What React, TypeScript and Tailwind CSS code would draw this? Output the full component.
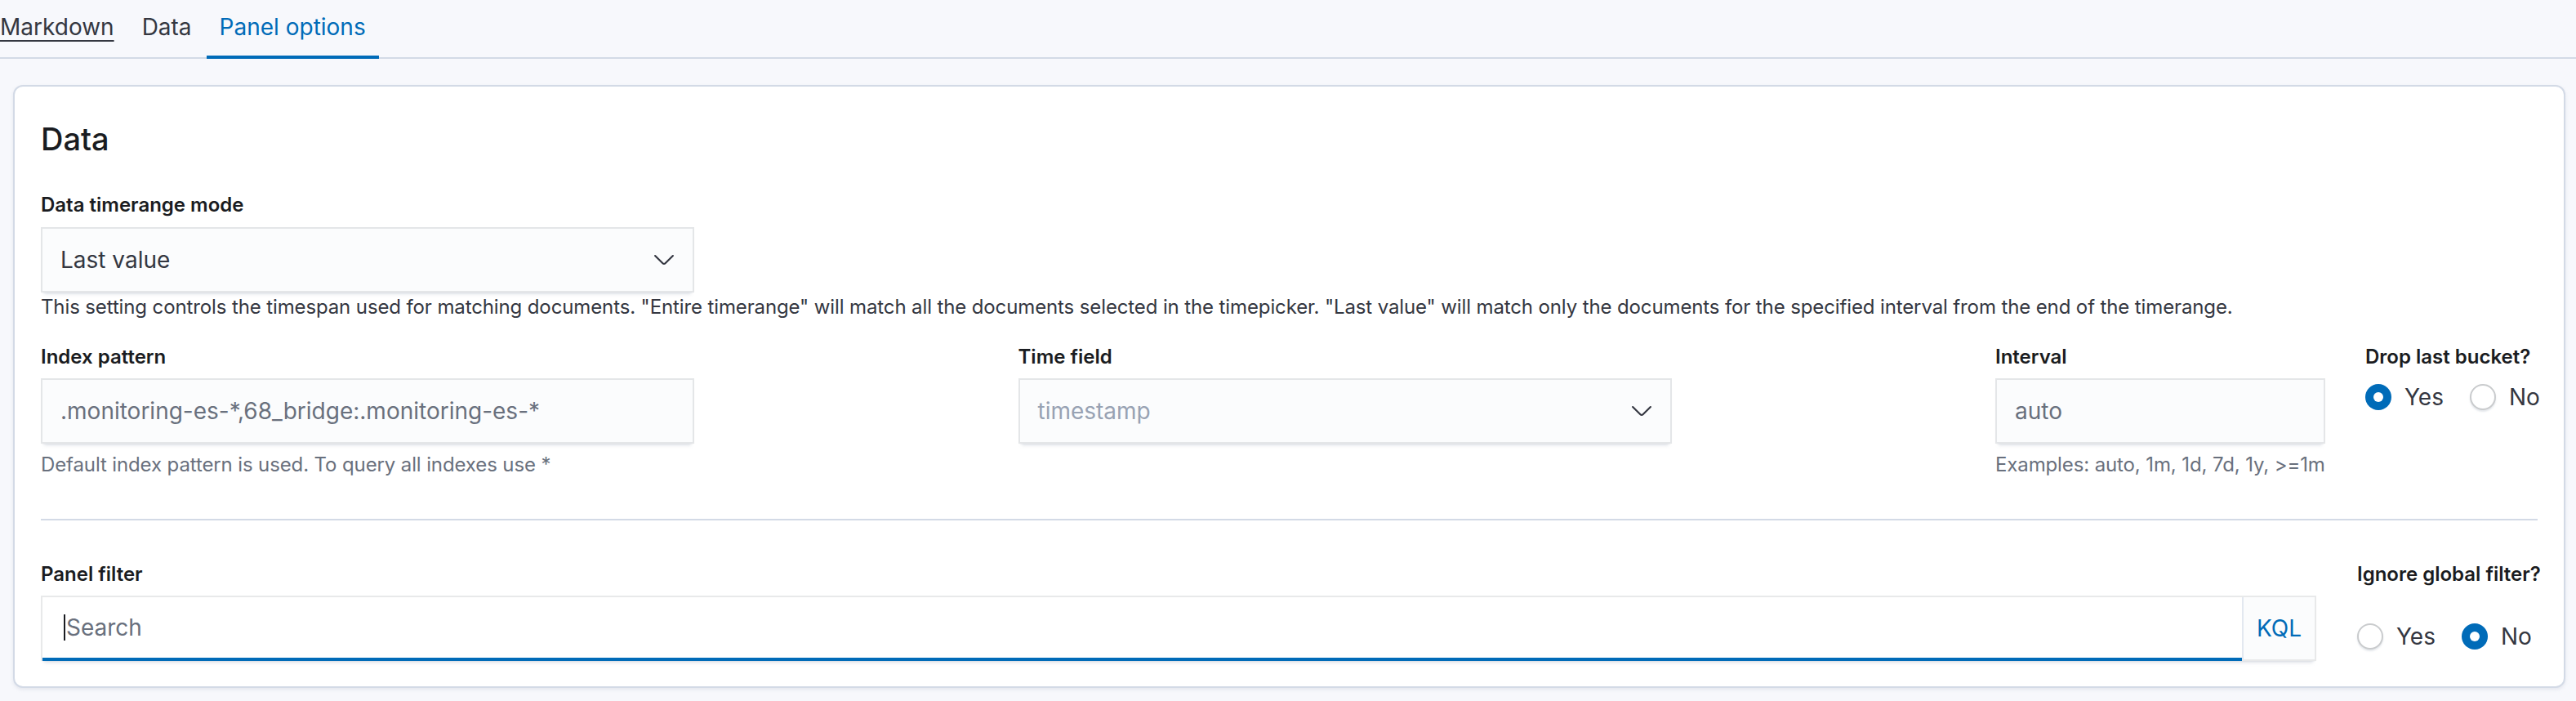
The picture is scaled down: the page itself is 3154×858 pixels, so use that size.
import React from "react";

const Chevron = () => (
  <svg width="32" height="32" viewBox="0 0 16 16" className="shrink-0">
    <path
      fill="#343741"
      d="M13.069 5.157L8.384 9.768a.546.546 0 01-.768 0L2.93 5.158a.552.552 0 00-.771 0 .53.53 0 000 .759l4.684 4.61c.641.631 1.672.63 2.312 0l4.684-4.61a.53.53 0 000-.76.552.552 0 00-.771 0z"
    />
  </svg>
);

const Label = ({ children, className = "" }: { children: React.ReactNode; className?: string }) => (
  <div className={`text-[24px] leading-[36px] font-semibold text-[#1A1C21] whitespace-nowrap ${className}`}>{children}</div>
);

const controlCls =
  "h-[80px] bg-[#FBFCFD] shadow-[inset_0_0_0_2px_rgba(32,38,47,0.1),0_2px_2px_-2px_rgba(152,162,179,0.3),0_6px_4px_-4px_rgba(152,162,179,0.3)] flex items-center text-[28px]";

const Radio = ({ checked, label, last }: { checked: boolean; label: string; last?: boolean }) => (
  <div className={`flex items-center ${last ? "" : "mr-[32px]"}`}>
    {checked ? (
      <span className="w-[32px] h-[32px] rounded-full bg-[#006BB8] flex items-center justify-center">
        <span className="w-[12px] h-[12px] rounded-full bg-white" />
      </span>
    ) : (
      <span className="w-[32px] h-[32px] rounded-full bg-white border-2 border-[#C9CBCD] shadow-[0_2px_2px_rgba(152,162,179,0.25)]" />
    )}
    <span className="ml-[16px] text-[28px] leading-[32px] text-[#343741]">{label}</span>
  </div>
);

const Tab = ({ label, active, underline }: { label: string; active?: boolean; underline?: boolean }) => (
  <div
    className={`h-[72px] px-[16px] pb-[2px] flex items-center border-b-4 text-[28px] leading-[34px] ${
      active ? "border-[#006BB8] text-[#006BB8]" : "border-transparent text-[#343741]"
    } ${underline ? "underline underline-offset-[6px] decoration-2" : ""}`}
  >
    {label}
  </div>
);

export default function App() {
  return (
    <div className="w-[3154px] h-[858px] bg-[#F7F8FC] font-['Inter',sans-serif] text-[#343741] overflow-hidden">
      <div className="h-[72px] border-b-2 border-[#D3DAE6]">
        <div className="flex -ml-[16px] gap-[2px]">
          <Tab label="Markdown" underline />
          <Tab label="Data" />
          <Tab label="Panel options" active />
        </div>
      </div>

      <div className="pl-[16px] pr-[13px] pt-[32px]">
        <div className="bg-white border-2 border-[#D3DAE6] rounded-[12px] shadow-[0_2px_4px_rgba(152,162,179,0.2)] pt-[41px] px-[32px] pb-[31px]">
          <h2 className="text-[38px] leading-[46px] font-medium text-[#1A1C21]">Data</h2>

          <Label className="mt-[40px] mb-[9px]">Data timerange mode</Label>
          <div className={`${controlCls} w-[800px] pl-[24px] pr-[21px] justify-between text-[#343741]`}>
            <span>Last value</span>
            <Chevron />
          </div>
          <p className="text-[24px] leading-[36px] tracking-[-0.005em] text-[#343741] whitespace-nowrap">
            This setting controls the timespan used for matching documents. "Entire timerange" will match all the documents selected in the timepicker. "Last value" will match only the documents for the specified interval from the end of the timerange.
          </p>

          <div className="flex gap-[32px] mt-[25px]">
            <div className="flex-1 min-w-0">
              <Label className="mb-[8px]">Index pattern</Label>
              <div className={`${controlCls} max-w-[800px] px-[24px] text-[#69707D]`}>
                .monitoring-es-*,68_bridge:.monitoring-es-*
              </div>
              <div className="mt-[8px] text-[24px] leading-[36px] tracking-[-0.005em] text-[#69707D] whitespace-nowrap">
                Default index pattern is used. To query all indexes use *
              </div>
            </div>
            <div className="flex-1 min-w-0">
              <Label className="mb-[8px]">Time field</Label>
              <div className={`${controlCls} max-w-[800px] pl-[24px] pr-[21px] justify-between text-[#98A2B3]`}>
                <span>timestamp</span>
                <Chevron />
              </div>
            </div>
            <div className="w-[421px] shrink-0">
              <Label className="mb-[8px]">Interval</Label>
              <div className={`${controlCls} w-[404px] px-[24px] text-[#69707D]`}>auto</div>
              <div className="mt-[8px] text-[24px] leading-[36px] tracking-[-0.005em] text-[#69707D] whitespace-nowrap">
                Examples: auto, 1m, 1d, 7d, 1y, &gt;=1m
              </div>
            </div>
            <div className="w-[211px] shrink-0">
              <Label>Drop last bucket?</Label>
              <div className="flex items-center h-[32px] mt-[15px]">
                <Radio checked label="Yes" />
                <Radio checked={false} label="No" last />
              </div>
            </div>
          </div>

          <div className="h-[2px] bg-[#D3DAE6] mt-[48px]" />

          <div className="flex gap-[50px] mt-[48px]">
            <div className="flex-1 min-w-0">
              <Label className="mb-[8px]">Panel filter</Label>
              <div className="h-[80px] flex bg-white shadow-[inset_0_0_0_2px_rgba(32,38,47,0.1),0_2px_2px_-2px_rgba(152,162,179,0.3),0_6px_4px_-4px_rgba(152,162,179,0.3)]">
                <div className="flex-1 flex items-center pl-[26px] border-b-4 border-[#006BB8] ml-[2px] mt-[2px]">
                  <span className="w-[2px] h-[32px] bg-[#1A1C21]" />
                  <span className="ml-[1px] text-[28px] text-[#69707D]">Search</span>
                </div>
                <div className="w-[89px] flex items-center justify-center bg-[#FBFCFD] border-l-2 border-[#E3E8F0] my-[2px] mr-[2px] text-[28px] text-[#006BB8]">
                  KQL
                </div>
              </div>
            </div>
            <div className="w-[221px] shrink-0">
              <Label>Ignore global filter?</Label>
              <div className="flex items-center h-[32px] mt-[42px]">
                <Radio checked={false} label="Yes" />
                <Radio checked label="No" last />
              </div>
            </div>
          </div>
        </div>
      </div>
    </div>
  );
}
